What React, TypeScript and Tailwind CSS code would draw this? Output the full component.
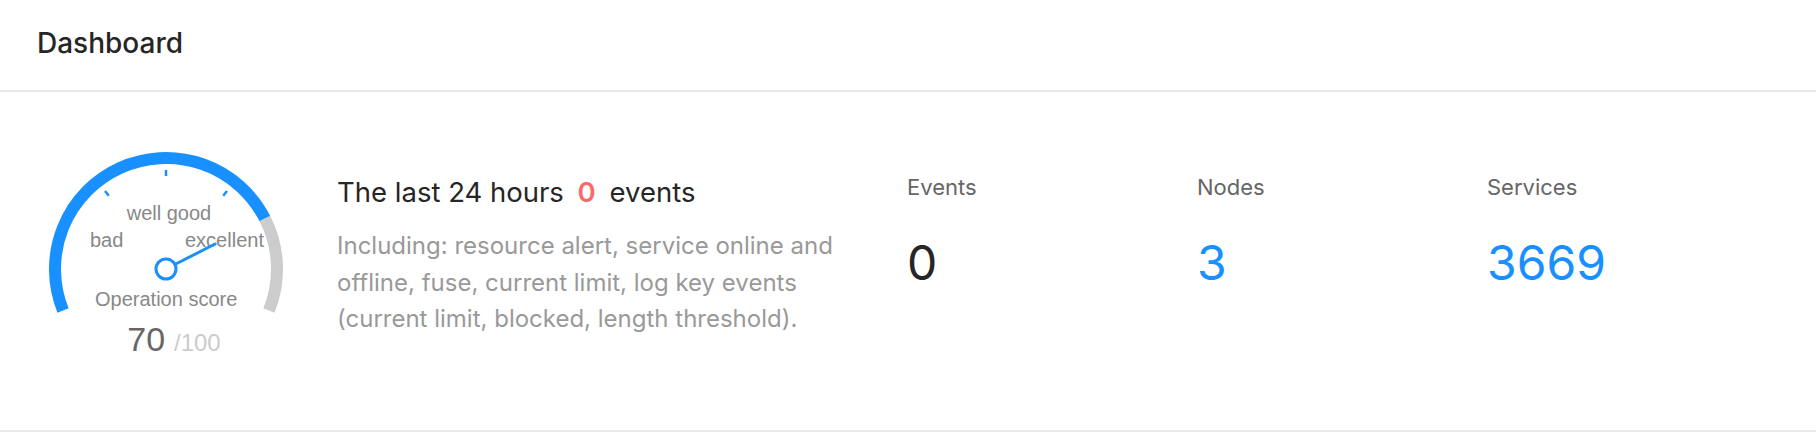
import React from 'react';

interface StatItem {
  label: string;
  value: string;
  color: string;
}

const stats: StatItem[] = [
  { label: 'Events', value: '0', color: 'text-[#262626]' },
  { label: 'Nodes', value: '3', color: 'text-[#1890ff]' },
  { label: 'Services', value: '3669', color: 'text-[#1890ff]' },
];

// point on the gauge circle, angle in degrees (0 = right, counter-clockwise)
const pt = (deg: number, r: number) => {
  const a = (deg * Math.PI) / 180;
  return [140 + r * Math.cos(a), 129 - r * Math.sin(a)];
};

const Gauge: React.FC = () => {
  const r = 111;
  const [sx, sy] = pt(202, r);
  const [mx, my] = pt(27, r);
  const [ex, ey] = pt(-22, r);
  const ticks = [128, 90, 52].map((d) => [pt(d, 93), pt(d, 99)]);
  const [p1x, p1y] = pt(27, 11.5);
  const [p2x, p2y] = pt(27, 55);

  return (
    <svg width={280} height={230} className="shrink-0 ml-[26px] mt-[48px]" style={{ fontFamily: '"Liberation Sans", Arial, sans-serif' }}>
      <path d={`M ${sx} ${sy} A ${r} ${r} 0 0 1 ${mx} ${my}`} fill="none" stroke="#1890ff" strokeWidth={12} />
      <path d={`M ${mx} ${my} A ${r} ${r} 0 0 1 ${ex} ${ey}`} fill="none" stroke="#cccccc" strokeWidth={12} />
      {ticks.map(([a, b], i) => (
        <line key={i} x1={a[0]} y1={a[1]} x2={b[0]} y2={b[1]} stroke="#1890ff" strokeWidth={2.5} />
      ))}
      <text x={100.7} y={80} fontSize={20} fill="#888888">well good</text>
      <text x={64} y={106.7} fontSize={20} fill="#888888">bad</text>
      <text x={159} y={106.7} fontSize={20} fill="#888888">excellent</text>
      <line x1={p1x} y1={p1y} x2={p2x} y2={p2y} stroke="#1890ff" strokeWidth={3} strokeLinecap="round" />
      <circle cx={140} cy={129} r={10} fill="#ffffff" stroke="#1890ff" strokeWidth={3} />
      <text x={69} y={166} fontSize={20} fill="#888888">Operation score</text>
      <text x={101.3} y={211} fontSize={34} fill="#666666">70</text>
      <text x={148} y={211} fontSize={24} fill="#cccccc">/100</text>
    </svg>
  );
};

const App: React.FC = () => {
  return (
    <div className="w-[1816px] bg-white font-['Inter',sans-serif]">
      <div className="h-[92px] border-b-2 border-[#e8e8e8] pl-[37px] pt-[25px]">
        <h1 className="text-[28px] leading-[36px] font-medium text-[#262626]">Dashboard</h1>
      </div>

      <div className="h-[340px] border-b-2 border-[#e8e8e8] flex items-start">
        <Gauge />

        <div className="ml-[31px] w-[530px] pt-[82px]">
          <h2 className="text-[27.5px] leading-[36px] text-[#262626]">
            The last 24 hours <span className="text-[#f56c6c] font-semibold mx-[6px]">0</span> events
          </h2>
          <p className="mt-[18px] text-[24px] leading-[36.5px] text-[#999999]">
            Including: resource alert, service online and offline, fuse, current limit, log key events (current limit, blocked, length threshold).
          </p>
        </div>

        <div className="ml-[40px] flex pt-[80px]">
          {stats.map((s) => (
            <div key={s.label} className="w-[290px]">
              <div className="text-[22px] leading-[30px] text-[#666666]">{s.label}</div>
              <div className={`mt-[33px] text-[48px] leading-[56px] ${s.color}`}>{s.value}</div>
            </div>
          ))}
        </div>
      </div>
    </div>
  );
};

export default App;
